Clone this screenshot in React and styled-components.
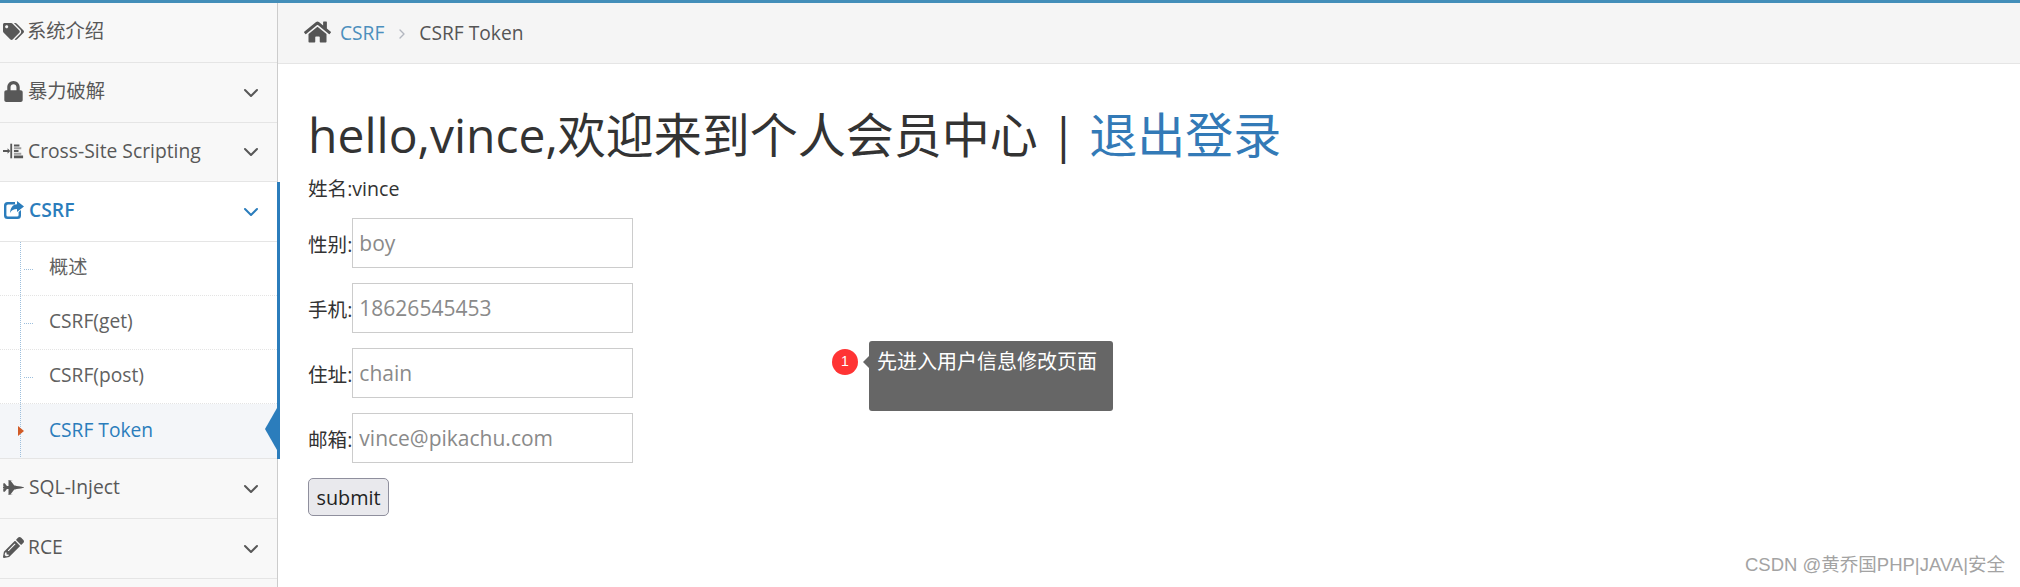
import styled, { createGlobalStyle } from 'styled-components';
import { FaTags, FaLock, FaFighterJet, FaPencilAlt, FaHome } from 'react-icons/fa';
import { ChevronDown, ChevronRight } from 'lucide-react';

const GlobalStyle = createGlobalStyle`
  html, body {
    margin: 0;
    padding: 0;
    background: #fff;
  }
  * {
    box-sizing: border-box;
  }
  body {
    font-family: "Open Sans", "Noto Sans CJK SC", sans-serif;
    color: #393939;
  }
`
const Page = styled.div`
  position: relative;
  width: 2020px;
  height: 587px;
  overflow: hidden;
  border-top: 3px solid #438eb9;
  display: flex;
`
const Sidebar = styled.nav`
  width: 278px;
  flex-shrink: 0;
  background: #f8f8f8;
  border-right: 1px solid #ccc;
`
const MenuItem = styled.div`
  height: ${(props) => props.$height}px;
  display: flex;
  align-items: center;
  gap: ${(props) => props.$gap || 4}px;
  padding: 0 14px 3px 3px;
  font-size: 19.3px;
  line-height: 26px;
  font-weight: ${(props) => (props.$open ? 600 : 400)};
  color: ${(props) => (props.$open ? '#2b7dbc' : '#585858')};
  background: ${(props) => (props.$open ? '#fff' : '#f8f8f8')};
  border-bottom: 1px solid #e5e5e5;
  white-space: nowrap;
`
const MenuLabel = styled.span`
  flex: 1;
`
const IconSlot = styled.span`
  width: 21px;
  display: flex;
  justify-content: center;
  font-size: 21px;
  line-height: 1;
`
const Chevron = styled(ChevronDown)`
  width: 24px;
  height: 24px;
  flex-shrink: 0;
  margin-top: 3px;
`
const OpenGroup = styled.div`
  position: relative;
  margin-right: -3px;
  border-right: 3px solid #2b7dbc;
  background: #fff;
`
const SubMenu = styled.div`
  position: relative;
  &::before {
    content: '';
    position: absolute;
    z-index: 1;
    left: 20px;
    top: 0;
    bottom: 2px;
    border-left: 1px dotted #9dbfdd;
  }
`
const SubItem = styled.div`
  position: relative;
  height: ${(props) => props.$height}px;
  display: flex;
  align-items: center;
  padding: 0 0 3px 49px;
  font-size: 19.2px;
  line-height: 26px;
  color: ${(props) => (props.$active ? '#2b7dbc' : '#616161')};
  background: ${(props) => (props.$active ? '#f4f6f9' : '#fff')};
  border-bottom: ${(props) => (props.$active ? '1px solid #e5e5e5' : '1px dotted #e4e4e4')};
  &::before {
    content: '';
    position: absolute;
    left: 24px;
    top: 50%;
    width: 9px;
    border-top: 1px dotted #9dbfdd;
    display: ${(props) => (props.$active ? 'none' : 'block')};
  }
`
const CurrentCaret = styled.span`
  position: absolute;
  z-index: 2;
  left: 18px;
  top: 50%;
  margin-top: -5px;
  border-left: 6px solid #d15b27;
  border-top: 5px solid transparent;
  border-bottom: 5px solid transparent;
`
const CurrentArrow = styled.span`
  position: absolute;
  right: 0;
  top: 4px;
  border-right: 12px solid #2b7dbc;
  border-top: 21px solid transparent;
  border-bottom: 21px solid transparent;
`
const Main = styled.main`
  flex: 1;
  min-width: 0;
`
const Breadcrumb = styled.div`
  height: 61px;
  display: flex;
  align-items: center;
  padding: 0 0 2px 26px;
  background: #f5f5f5;
  border-bottom: 1px solid #e5e5e5;
  font-size: 19.2px;
  color: #555;
`
const HomeIcon = styled(FaHome)`
  width: 27px;
  height: 24px;
  color: #555;
  margin-right: 9px;
`
const CrumbLink = styled.span`
  color: #4c8fbd;
`
const CrumbSep = styled(ChevronRight)`
  width: 16px;
  height: 16px;
  margin: 3px 9px 0 10px;
  color: #b2b6bf;
`
const Content = styled.section`
  padding: 36px 0 0 30px;
`
const Title = styled.h1`
  margin: 0 0 6px;
  font-size: 48px;
  font-weight: 400;
  line-height: 70px;
  color: #333;
  white-space: nowrap;
`
const TitleLink = styled.span`
  color: #337ab7;
`
const NameLine = styled.p`
  margin: 0 0 16px;
  font-size: 19.6px;
  line-height: 26px;
  color: #333;
`
const Form = styled.form`
  display: flex;
  flex-direction: column;
  align-items: flex-start;
  gap: 15px;
`
const Field = styled.label`
  display: flex;
  align-items: center;
  font-size: 19.6px;
  color: #333;
`
const Input = styled.input`
  width: 281px;
  height: 50px;
  padding: 0 6px;
  border: 1px solid #ccc;
  outline: none;
  font-family: inherit;
  font-size: 21px;
  &::placeholder {
    color: #8a8a8a;
    opacity: 1;
  }
`
const SubmitButton = styled.button`
  width: 81px;
  height: 38px;
  padding: 0;
  background: #e9e9ed;
  border: 1px solid #8f8f9d;
  border-radius: 5px;
  font-family: inherit;
  font-size: 19.8px;
  color: #222;
`
const Badge = styled.span`
  position: absolute;
  left: 832px;
  top: 346px;
  width: 26px;
  height: 26px;
  padding-bottom: 2px;
  border-radius: 50%;
  background: #ff3434;
  color: #fff;
  display: flex;
  align-items: center;
  justify-content: center;
  font-family: "Liberation Sans", sans-serif;
  font-size: 14px;
`
const Tooltip = styled.div`
  position: absolute;
  left: 869px;
  top: 338px;
  width: 244px;
  height: 70px;
  padding: 7px 8px;
  background: #666;
  border-radius: 3px;
  color: #fff;
  font-family: "Noto Sans CJK SC", sans-serif;
  font-size: 20px;
  line-height: 26px;
  white-space: nowrap;
  &::before {
    content: '';
    position: absolute;
    left: -6px;
    top: 15px;
    border-right: 6px solid #666;
    border-top: 6px solid transparent;
    border-bottom: 6px solid transparent;
  }
`
const Watermark = styled.div`
  position: absolute;
  right: 15px;
  bottom: 10px;
  font-family: "Liberation Sans", "Noto Sans CJK SC", sans-serif;
  font-size: 18.5px;
  line-height: 24px;
  color: #a3a3a3;
  white-space: nowrap;
`

function IndentIcon() {
  return (
    <svg width="23" height="16" viewBox="0 0 23 16" fill="currentColor">
      <path d="M0 7h5V5l3 3-3 3V9H0z" />
      <path d="M8 0h2v16H8z" />
      <path d="M12 1h6v2h-6zM12 7h5v2h-5zM12 13h10v3H12z" />
      <path d="M12 4h8v2h-8zM12 10h8v2h-8z" opacity="0.55" />
    </svg>
  )
}

function ShareIcon() {
  return (
    <svg width="20" height="18" viewBox="0 0 20 18" fill="currentColor">
      <path d="M3.5 1H11v2.4H4A1.6 1.6 0 0 0 2.4 5v9A1.6 1.6 0 0 0 4 15.6h9a1.6 1.6 0 0 0 1.6-1.6v-3l2.4-2v5.5a3.5 3.5 0 0 1-3.5 3.5h-10A3.5 3.5 0 0 1 0 14.500v-10A3.5 3.500 0 0 1 3.500 1z" />
      <path d="M13 0l7 5.500-7 5.500V8C9.500 8 7.500 9 6.200 12 6.200 7 8.500 3.500 13 3.200z" />
    </svg>
  )
}

function App() {
  return (
    <Page>
      <GlobalStyle />
      <Sidebar>
        <MenuItem $height={60} $gap={3}>
          <IconSlot><FaTags /></IconSlot>
          <MenuLabel>系统介绍</MenuLabel>
        </MenuItem>
        <MenuItem $height={60}>
          <IconSlot><FaLock /></IconSlot>
          <MenuLabel>暴力破解</MenuLabel>
          <Chevron />
        </MenuItem>
        <MenuItem $height={59}>
          <IconSlot><IndentIcon /></IconSlot>
          <MenuLabel>Cross-Site Scripting</MenuLabel>
          <Chevron />
        </MenuItem>
        <OpenGroup>
          <MenuItem $height={60} $open $gap={5}>
            <IconSlot><ShareIcon /></IconSlot>
            <MenuLabel>CSRF</MenuLabel>
            <Chevron />
          </MenuItem>
          <SubMenu>
            <SubItem $height={54}>概述</SubItem>
            <SubItem $height={54}>CSRF(get)</SubItem>
            <SubItem $height={54}>CSRF(post)</SubItem>
            <SubItem $height={55} $active>
              <CurrentCaret />
              CSRF Token
              <CurrentArrow />
            </SubItem>
          </SubMenu>
        </OpenGroup>
        <MenuItem $height={60} $gap={5}>
          <IconSlot><FaFighterJet /></IconSlot>
          <MenuLabel>SQL-Inject</MenuLabel>
          <Chevron />
        </MenuItem>
        <MenuItem $height={60}>
          <IconSlot><FaPencilAlt /></IconSlot>
          <MenuLabel>RCE</MenuLabel>
          <Chevron />
        </MenuItem>
      </Sidebar>
      <Main>
        <Breadcrumb>
          <HomeIcon />
          <CrumbLink>CSRF</CrumbLink>
          <CrumbSep />
          <span>CSRF Token</span>
        </Breadcrumb>
        <Content>
          <Title>hello,vince,欢迎来到个人会员中心 | <TitleLink>退出登录</TitleLink></Title>
          <NameLine>姓名:vince</NameLine>
          <Form>
            <Field>性别:<Input placeholder="boy" /></Field>
            <Field>手机:<Input placeholder="18626545453" /></Field>
            <Field>住址:<Input placeholder="chain" /></Field>
            <Field>邮箱:<Input placeholder="vince@pikachu.com" /></Field>
            <SubmitButton type="button">submit</SubmitButton>
          </Form>
        </Content>
      </Main>
      <Badge>1</Badge>
      <Tooltip>先进入用户信息修改页面</Tooltip>
      <Watermark>CSDN @黄乔国PHP|JAVA|安全</Watermark>
    </Page>
  )
}

export default App
